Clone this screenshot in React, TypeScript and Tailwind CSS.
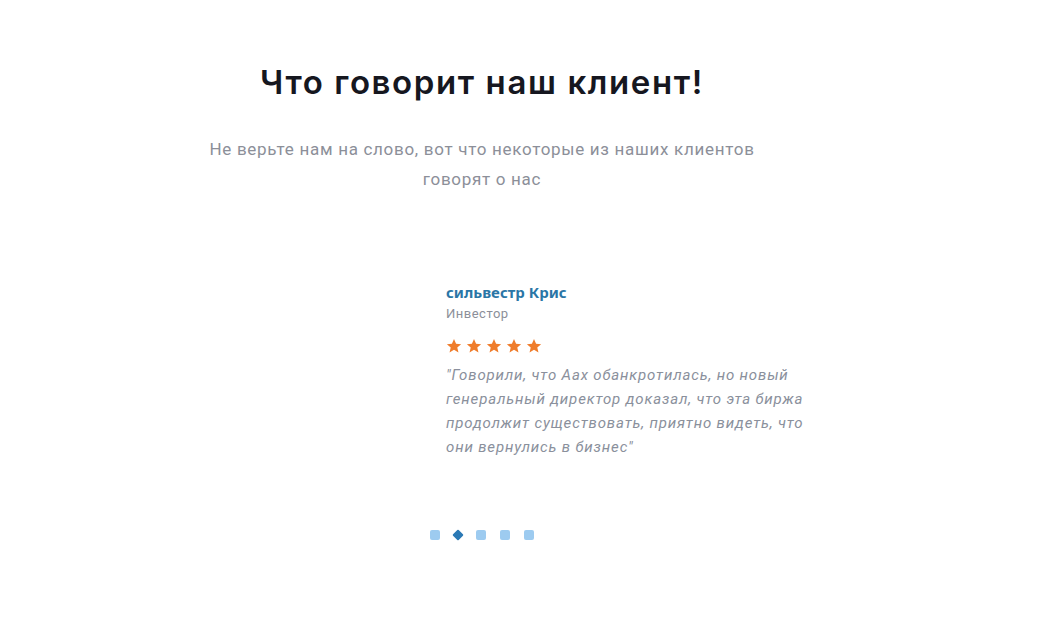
import React from 'react';

const reviews = [
  {
    name: 'сильвестр Крис',
    role: 'Инвестор',
    text: '"Говорили, что Аах обанкротилась, но новый генеральный директор доказал, что эта биржа продолжит существовать, приятно видеть, что они вернулись в бизнес"',
  },
];

const Star = () => (
  <svg width="16" height="16" viewBox="0 0 24 24" className="fill-[#ef7c2b]">
    <path d="M12 1.5l3.1 7.2 7.6.6-5.8 5 1.8 7.5L12 17.8l-6.7 4 1.8-7.5-5.8-5 7.6-.6z" />
  </svg>
);

export default function App() {
  const active = 1;
  const r = reviews[0];
  return (
    <div className="flex min-h-[640px] w-full justify-center bg-white font-['Inter',sans-serif]">
      <div className="mr-[78px] flex w-[584px] flex-col items-center pt-[60px]">
        <h2 className="text-[33px] font-semibold leading-[44px] tracking-[1.6px] text-[#16171f]">
          Что говорит наш клиент!
        </h2>
        <p className="mt-[30px] w-[560px] text-center font-['Roboto',sans-serif] text-[17px] leading-[30px] tracking-[0.7px] text-[#8c8f99]">
          Не верьте нам на слово, вот что некоторые из наших клиентов говорят о нас
        </p>

        <div className="mt-[87px] ml-[256px] w-[380px] self-start">
          <div className="font-['Noto_Sans',sans-serif] text-[15px] font-bold leading-[22px] text-[#2a76a6]">
            {r.name}
          </div>
          <div className="mt-[1px] font-['Roboto',sans-serif] text-[13px] leading-[20px] tracking-[0.5px] text-[#8c8f99]">
            {r.role}
          </div>
          <div className="mt-[14px] flex gap-[4px]">
            {[0, 1, 2, 3, 4].map((i) => (
              <Star key={i} />
            ))}
          </div>
          <p className="mt-[9px] font-['Roboto',sans-serif] text-[15px] italic leading-[24px] tracking-[0.85px] text-[#8a909c]">
            {r.text}
          </p>
        </div>

        <div className="mt-[71px] flex items-center gap-[14px]">
          {[0, 1, 2, 3, 4].map((i) =>
            i === active ? (
              <span key={i} className="h-[8px] w-[8px] rotate-45 rounded-[1px] bg-[#2b79b5]" />
            ) : (
              <span key={i} className="h-[10px] w-[10px] rounded-[2px] bg-[#9dcbf0]" />
            ),
          )}
        </div>
      </div>
    </div>
  );
}
